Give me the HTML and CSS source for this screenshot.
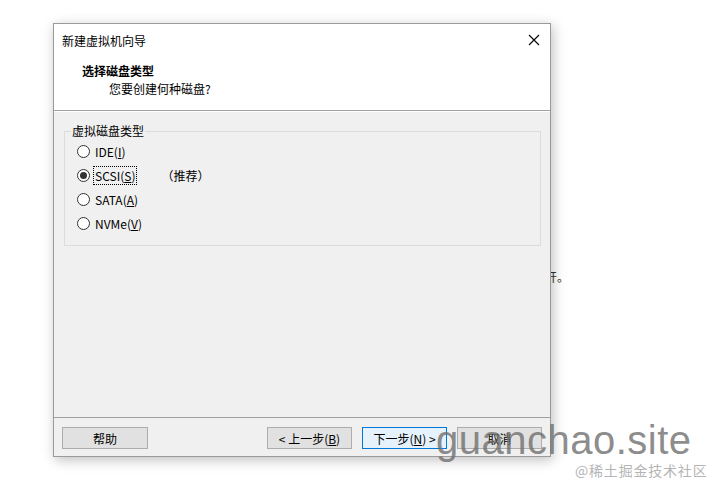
FILE: index.html
```html
<!DOCTYPE html>
<html lang="zh-CN">
<head>
    <meta charset="UTF-8">
    <title>新建虚拟机向导</title>
    <link rel="stylesheet" href="styles.css">
</head>
<body>

<!-- texto de la ventana de atrás -->
<div class="back-text">开。</div>

<div class="dialog">
    <div class="titlebar">
        <span class="title">新建虚拟机向导</span>
        <span class="close">
            <svg width="12" height="12" viewBox="0 0 12 12"><path d="M1 1 L11 11 M11 1 L1 11" stroke="#000" stroke-width="1.1" fill="none"/></svg>
        </span>
    </div>

    <div class="header">
        <div class="header-title">选择磁盘类型</div>
        <div class="header-sub">您要创建何种磁盘?</div>
    </div>

    <div class="body">
        <fieldset class="group">
            <legend>虚拟磁盘类型</legend>
            <div class="options">
                <div class="radio"><span class="dot"></span><span class="label">IDE(<u>I</u>)</span></div>
                <div class="radio checked"><span class="dot"></span><span class="label focus">SCSI(<u>S</u>)</span><span class="hint">（推荐）</span></div>
                <div class="radio"><span class="dot"></span><span class="label">SATA(<u>A</u>)</span></div>
                <div class="radio"><span class="dot"></span><span class="label">NVMe(<u>V</u>)</span></div>
            </div>
        </fieldset>
    </div>

    <div class="footer">
        <button class="btn">帮助</button>
        <div class="spacer"></div>
        <button class="btn">&lt; 上一步(<u>B</u>)</button>
        <button class="btn default">下一步(<u>N</u>) &gt;</button>
        <button class="btn">取消</button>
    </div>
</div>

<div class="mark">guanchao.site</div>
<div class="mark-small">@稀土掘金技术社区</div>

</body>
</html>
```

FILE: styles.css
```css
body {
    margin: 0;
    width: 716px;
    height: 483px;
    overflow: hidden;
    position: relative;
    background-color: #fff;
    font-family: "Noto Sans CJK SC", sans-serif;
    font-size: 12px;
    color: #000;
}
.back-text {
    position: absolute;
    left: 545px;
    top: 268px;
    color: #333;
}
.dialog {
    position: absolute;
    left: 53px;
    top: 23px;
    width: 498px;
    height: 434px;
    box-sizing: border-box;
    border: 1px solid #9a9a9a;
    background-color: #f0f0f0;
    box-shadow: 2px 3px 12px rgba(0,0,0,0.25);
    display: flex;
    flex-direction: column;
}
.titlebar {
    height: 32px;
    background-color: #fff;
    display: flex;
    align-items: center;
    padding-left: 8px;
}
.title {
    flex-grow: 1;
}
.close {
    width: 12px;
    height: 12px;
    margin-right: 10px;
    display: flex;
}
.header {
    height: 54px;
    background-color: #fff;
    padding-left: 28px;
    border-bottom: 1px solid #a0a0a0;
}
.header-title {
    font-weight: bold;
    line-height: 18px;
    margin-top: 6px;
}
.header-sub {
    padding-left: 27px;
    line-height: 18px;
}
.body {
    flex-grow: 1;
    padding: 12px 9px 0 10px;
    border-top: 1px solid #fff;
}
.group {
    margin: 0;
    padding: 0;
    height: 122px;
    box-sizing: border-box;
    border: 1px solid #dcdcdc;
    border-radius: 0;
}
.group legend {
    padding: 0 1px;
    margin-left: 6px;
    line-height: 14px;
}
.options {
    padding: 1px 0 0 12px;
}
.radio {
    display: flex;
    align-items: center;
    height: 24px;
}
.dot {
    width: 11px;
    height: 11px;
    border: 1px solid #333;
    border-radius: 50%;
    background-color: #fff;
    display: flex;
    align-items: center;
    justify-content: center;
    margin-right: 3px;
}
.radio.checked .dot::after {
    content: "";
    width: 7px;
    height: 7px;
    border-radius: 50%;
    background-color: #333;
}
.label {
    padding: 0 1px;
    border: 1px dotted transparent;
}
.label.focus {
    border-color: #000;
}
.hint {
    margin-left: 24px;
}
.footer {
    height: 39px;
    border-top: 1px solid #a0a0a0;
    display: flex;
    align-items: flex-start;
    padding: 9px 8px 0 8px;
    box-sizing: border-box;
}
.spacer {
    flex-grow: 1;
}
.btn {
    width: 85px;
    height: 22px;
    margin-left: 10px;
    padding: 0;
    background-color: #e1e1e1;
    border: 1px solid #adadad;
    font-family: "Noto Sans CJK SC", sans-serif;
    font-size: 12px;
    color: #000;
}
.btn:first-child {
    margin-left: 0;
    width: 86px;
}
.btn.default {
    border-color: #0078d7;
    background-color: #e5f1fb;
}
.mark {
    position: absolute;
    left: 436px;
    top: 418px;
    font-family: "Liberation Sans", sans-serif;
    font-size: 40px;
    color: rgba(110,110,110,0.8);
    letter-spacing: 0.5px;
}
.mark-small {
    position: absolute;
    left: 575px;
    top: 460px;
    font-size: 14px;
    letter-spacing: 0.8px;
    color: #b5b5b5;
}
```
